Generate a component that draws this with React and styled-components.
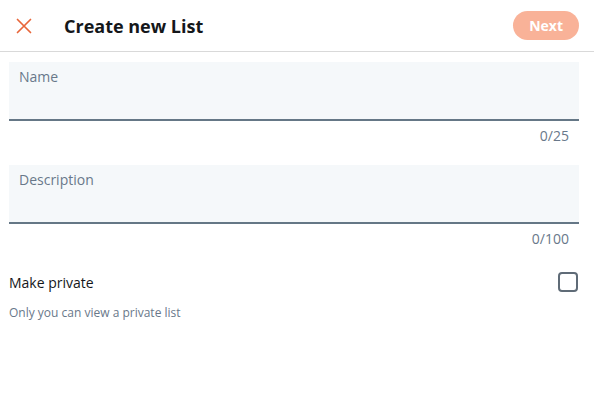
import styled, { createGlobalStyle } from "styled-components"

const GlobalStyle = createGlobalStyle`
  html, body {
    margin: 0;
    padding: 0;
    background: #ffffff;
    font-family: "Open Sans", "Noto Sans", sans-serif;
  }
  * { box-sizing: border-box; }
`

const Modal = styled.div`
  width: 594px;
  height: 400px;
  background: #ffffff;
  display: flex;
  flex-direction: column;
`

const Header = styled.div`
  height: 52px;
  display: flex;
  align-items: center;
  padding: 0 15px 0 15px;
  border-bottom: 1px solid #d9d9d9;
`

const CloseButton = styled.button`
  width: 18px;
  height: 18px;
  padding: 0;
  border: none;
  background: transparent;
  display: flex;
  align-items: center;
  justify-content: center;
  cursor: pointer;
`

const Title = styled.h2`
  margin: 0 0 0 31px;
  flex: 1;
  font-size: 18px;
  font-weight: 700;
  color: #14171a;
`

const NextButton = styled.button`
  height: 29px;
  padding: 0 16px;
  border: none;
  border-radius: 15px;
  background: #f9b298;
  color: #ffffff;
  font-family: inherit;
  font-size: 14px;
  font-weight: 700;
  cursor: default;
`

const Body = styled.div`
  padding: 10px 15px 0 9px;
  display: flex;
  flex-direction: column;
`

const Field = styled.div`
  height: 59px;
  background: #f5f8fa;
  border-bottom: 2px solid #657786;
  padding: 6px 10px;
`

const Label = styled.div`
  font-size: 14px;
  color: #69788a;
  line-height: 18px;
`

const Counter = styled.div`
  text-align: right;
  font-size: 14px;
  color: #69788a;
  padding: 5px 10px 0 0;
  line-height: 19px;
  margin-bottom: ${props => props.gap}px;
`

const PrivateRow = styled.div`
  display: flex;
  align-items: center;
  justify-content: space-between;
  margin-top: 24px;
`

const RowLabel = styled.div`
  font-size: 14px;
  color: #14171a;
`

const Checkbox = styled.div`
  width: 20px;
  height: 20px;
  border: 2px solid #5f6b77;
  border-radius: 4px;
  margin-right: 1px;
`

const Hint = styled.div`
  margin-top: 12px;
  font-size: 12px;
  color: #69788a;
`

export default function App() {
  return (
    <>
      <GlobalStyle />
      <Modal>
        <Header>
          <CloseButton>
            <svg width="16" height="16" viewBox="0 0 16 16">
              <path d="M1.5 1.5 L14.5 14.5 M14.5 1.5 L1.5 14.5" stroke="#e8663a" strokeWidth="1.7" strokeLinecap="round" />
            </svg>
          </CloseButton>
          <Title>Create new List</Title>
          <NextButton>Next</NextButton>
        </Header>
        <Body>
          <Field>
            <Label>Name</Label>
          </Field>
          <Counter gap={20}>0/25</Counter>
          <Field>
            <Label>Description</Label>
          </Field>
          <Counter gap={0}>0/100</Counter>
          <PrivateRow>
            <RowLabel>Make private</RowLabel>
            <Checkbox />
          </PrivateRow>
          <Hint>Only you can view a private list</Hint>
        </Body>
      </Modal>
    </>
  )
}
